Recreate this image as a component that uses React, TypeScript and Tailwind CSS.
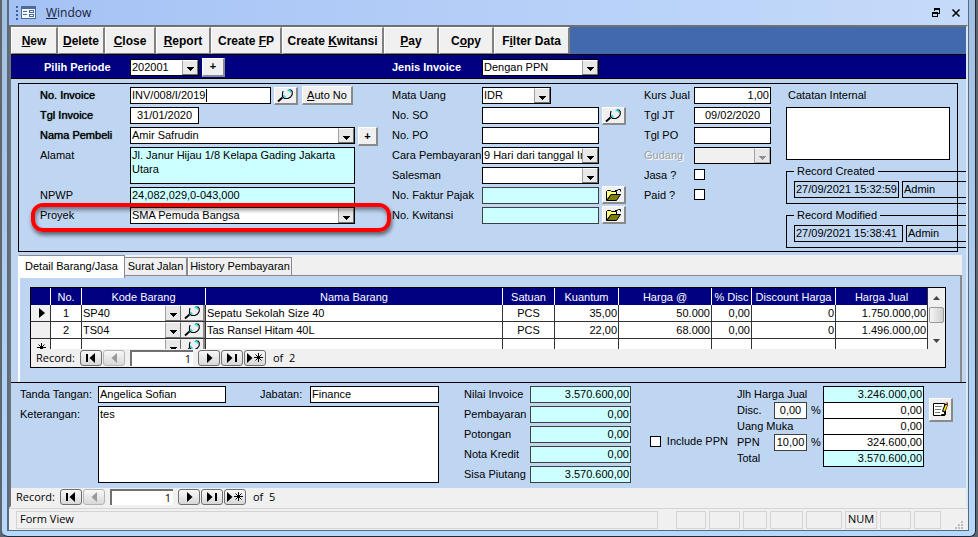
import { useId, type ReactNode } from 'react'
import clsx from 'clsx'

const field = 'h-[17px] border border-black bg-white px-px pb-px text-[11px] leading-[14px] outline-none rounded-none'
const raised =
  'flex items-center justify-center bg-[#f0f0f0] border-t border-l border-t-white border-l-white border-r-2 border-b-2 border-r-[#8a8a8a] border-b-[#8a8a8a]'
const strong = 'w-[90px] [text-shadow:0_0_1px_#000]'

function Combo({ id, value, className, disabled, label }: { id?: string; value: string; className?: string; disabled?: boolean; label?: string }) {
  return (
    <div className={clsx('relative flex h-[17px] border border-black', disabled ? 'bg-[#f0f0f0]' : 'bg-white', className)}>
      <select id={id} aria-label={label} disabled={disabled} className="w-full appearance-none bg-transparent pl-px pr-4 text-[11px] leading-[15px] outline-none">
        <option>{value}</option>
      </select>
      <ArrowBox disabled={disabled} />
    </div>
  )
}

function ArrowBox({ disabled }: { disabled?: boolean }) {
  return (
    <span className={clsx('pointer-events-none absolute inset-y-0 right-0 flex w-4 items-center justify-center border border-t-white border-l-[#a0a0a0] bg-[#e8e8e8]', disabled ? 'border-r-[#b0b0b0] border-b-[#b0b0b0]' : 'border-r-[#707070] border-b-[#707070]')}>
      <svg width="7" height="4" viewBox="0 0 7 4" className="mt-1" shapeRendering="crispEdges">
        <path d="M0 0h7v1H0zM1 1h5v1H1zM2 2h3v1H2zM3 3h1v1H3z" fill={disabled ? '#909090' : '#000'} />
      </svg>
    </span>
  )
}

function Row({ label, children, labelClass = 'w-[90px]' }: { label: string; children: (id: string) => ReactNode; labelClass?: string }) {
  const id = useId()
  return (
    <div className="flex">
      <label htmlFor={id} className={clsx('shrink-0 whitespace-nowrap leading-[17px]', labelClass)}>
        {label}
      </label>
      {children(id)}
    </div>
  )
}

function SearchIcon() {
  return (
    <svg width="17" height="14" viewBox="0 0 17 14" fill="none">
      <path d="M6 2L5.500 4.500V7.500L7.500 9.500H11L13.500 8L15.200 5.500V2.500L14 1H11.500" stroke="#000" strokeWidth="1.100" />
      <path d="M1 12.500L5.500 8.500" stroke="#000" strokeWidth="1.800" />
      <path d="M10.500 1.500H12.500L13.800 3.500" stroke="#00e5f0" strokeWidth="1.300" />
      <path d="M6.500 6L8.500 8.500" stroke="#00e5f0" strokeWidth="1.300" />
    </svg>
  )
}

function FolderIcon() {
  return (
    <svg width="17" height="14" viewBox="0 0 17 14">
      <path d="M1.500 12.500V3.500L2.500 2.500H5.500L6.500 3.500H11.500V6.500H6L1.500 12.500Z" fill="#ffff80" stroke="#000" />
      <path d="M2 12.500L6 6.500H15.500L11.500 12.500Z" fill="#808000" stroke="#000" />
      <path d="M10 2.500H12L13.500 1.500H15.500V3.500" fill="none" stroke="#000" />
    </svg>
  )
}

function NoteIcon() {
  return (
    <svg width="17" height="17" viewBox="0 0 17 17" fill="none">
      <path d="M1.500 2.500H12.500V13.500H9.500L8.500 14.500H1.500Z" fill="#fff" stroke="#000" />
      <path d="M9 14.500H13M13.500 10V14" stroke="#000" />
      <path d="M3 5.500H10M3 8.500H9M3 11.500H8" stroke="#777" />
      <path d="M14.500 3L11.500 11" stroke="#000" strokeWidth="3.500" />
      <path d="M14.500 4L12 10" stroke="#ffe600" strokeWidth="1.800" />
      <path d="M13.500 1.500H16V4Z" fill="#d02020" />
    </svg>
  )
}

function IconButton({ label, className, children }: { label: string; className?: string; children: ReactNode }) {
  return (
    <button type="button" aria-label={label} className={clsx(raised, className)}>
      {children}
    </button>
  )
}

const toolbar = [
  { pre: '', key: 'N', post: 'ew', width: 'w-[47px]' },
  { pre: '', key: 'D', post: 'elete', width: 'w-[47px]' },
  { pre: '', key: 'C', post: 'lose', width: 'w-[51px]' },
  { pre: '', key: 'R', post: 'eport', width: 'w-[55px]' },
  { pre: 'Create ', key: 'F', post: 'P', width: 'w-[71px]' },
  { pre: 'Create ', key: 'K', post: 'witansi', width: 'w-[102px]' },
  { pre: '', key: 'P', post: 'ay', width: 'w-[55px]' },
  { pre: 'C', key: 'o', post: 'py', width: 'w-[55px]' },
  { pre: 'F', key: 'i', post: 'lter Data', width: 'w-[76px]' },
]

const items = [
  { no: '1', kode: 'SP40', nama: 'Sepatu Sekolah Size 40', satuan: 'PCS', qty: '35,00', harga: '50.000', disc: '0,00', discHarga: '0', jual: '1.750.000,00' },
  { no: '2', kode: 'TS04', nama: 'Tas Ransel Hitam 40L', satuan: 'PCS', qty: '22,00', harga: '68.000', disc: '0,00', discHarga: '0', jual: '1.496.000,00' },
  { no: '', kode: '', nama: '', satuan: '', qty: '', harga: '', disc: '', discHarga: '', jual: '' },
]

function Star() {
  return <path d="M4.500 0V9M0 4.500H9M1.500 1.500L7.500 7.500M7.500 1.500L1.500 7.500" stroke="#000" fill="none" />
}

function NavButton({ kind, label, disabled }: { kind: 'first' | 'prev' | 'next' | 'last' | 'new'; label: string; disabled?: boolean }) {
  const color = disabled ? '#999' : '#000'
  return (
    <button
      type="button"
      aria-label={label}
      disabled={disabled}
      className={clsx('flex h-4 w-[22px] items-center justify-center rounded-[3px] border bg-linear-to-b from-[#f8f8f8] to-[#d8d8d8]', disabled ? 'border-[#b5b5b5]' : 'border-[#6f6f6f]')}
    >
      <svg width="18" height="10" viewBox="0 0 18 10">
        {kind === 'first' && <path d="M4 1h2v8H4zM13 0v10L7.500 5z" fill={color} />}
        {kind === 'prev' && <path d="M12 0v10L6.500 5z" fill={color} />}
        {kind === 'next' && <path d="M7 0v10L12.500 5z" fill={color} />}
        {kind === 'last' && <path d="M4 0v10L9.500 5zM12 1h2v8h-2z" fill={color} />}
        {kind === 'new' && (
          <>
            <path d="M1 0v10L6.500 5z" fill={color} />
            <g transform="translate(8 0)">
              <Star />
            </g>
          </>
        )}
      </svg>
    </button>
  )
}

function RecordNav({ total }: { total: string }) {
  const id = useId()
  return (
    <div className="flex h-[18px] items-center bg-[#f0f0f0] pl-[5px] font-['Open_Sans',sans-serif] text-[11px]">
      <label htmlFor={id} className="w-11">
        Record:
      </label>
      <div className="flex gap-px">
        <NavButton kind="first" label="First record" />
        <NavButton kind="prev" label="Previous record" disabled />
      </div>
      <input id={id} defaultValue="1" className="mx-[5px] h-4 w-[63px] border-t-2 border-l-2 border-[#707070] bg-white pr-0.5 text-right outline-none" />
      <div className="flex gap-px">
        <NavButton kind="next" label="Next record" />
        <NavButton kind="last" label="Last record" />
        <NavButton kind="new" label="New record" />
      </div>
      <span className="ml-[7px]">of&nbsp; {total}</span>
    </div>
  )
}

function MenuBar() {
  return (
    <header className="flex h-[25px] items-center bg-linear-to-r from-[#a5c2f5] to-[#c5dbfa] px-[7px] font-['Open_Sans',sans-serif] text-xs">
      <svg width="20" height="15" viewBox="0 0 20 15" className="mr-[10px]" shapeRendering="crispEdges">
        <path d="M0 1h2v2H0zM0 5h2v2H0zM0 9h2v2H0zM0 13h2v2H0z" fill="#3c5f9c" />
        <path d="M5 1h15v13H5z" fill="#4d6a9c" />
        <path d="M6 4h13v9H6z" fill="#f4f8ff" />
        <path d="M7 6h4v1H7zM7 9h4v1H7zM13 5h5v3h-5zM13 9h5v3h-5z" fill="#4d6a9c" />
        <path d="M14 6h3v1h-3zM14 10h3v1h-3z" fill="#fff" />
      </svg>
      <button type="button" className="text-[#16233a]">
        <u>W</u>indow
      </button>
      <div className="ml-auto flex gap-[10px]">
        <button type="button" aria-label="Restore">
          <svg width="10" height="10" viewBox="0 0 10 10" shapeRendering="crispEdges">
            <path d="M3 0h6v6H7V5h1V2H4v1H3zM1 4h6v5H1z" fill="#000" />
            <path d="M2 6h4v2H2z" fill="#c5dbfa" />
          </svg>
        </button>
        <button type="button" aria-label="Close">
          <svg width="10" height="10" viewBox="0 0 10 10">
            <path d="M1.500 1.500L8.500 8.500M8.500 1.500L1.500 8.500" stroke="#000" strokeWidth="1.500" />
          </svg>
        </button>
      </div>
    </header>
  )
}

function PeriodBar() {
  return (
    <div className="grid h-[25px] grid-cols-[348px_1fr] items-center border-y border-black bg-[#000080] pt-px pl-[33px]">
      <div className="flex items-center">
        <label htmlFor="periode" className="w-[86px] font-bold text-white">
          Pilih Periode
        </label>
        <Combo id="periode" value="202001" className="w-[69px]" />
        <button type="button" className={clsx(raised, 'ml-[3px] h-[19px] w-[23px] font-bold')}>
          +
        </button>
      </div>
      <div className="flex items-center">
        <label htmlFor="jenis" className="w-[90px] font-bold text-white">
          Jenis Invoice
        </label>
        <Combo id="jenis" value="Dengan PPN" className="w-[117px]" />
      </div>
    </div>
  )
}

function InvoiceHeader() {
  return (
    <section className="mt-1 mr-2 ml-[7px] grid grid-cols-[352px_252px_142px_1fr] border border-black py-[3px] pl-[21px]">
      <div className="flex flex-col gap-[3px]">
        <Row label="No. Invoice" labelClass={strong}>
          {(id) => (
            <div className="flex">
              <div className="relative flex">
                <input id={id} defaultValue="INV/008/I/2019" className={clsx(field, 'w-[141px]')} />
                <span className="absolute top-0.5 left-[76px] h-[13px] w-px bg-black" />
              </div>
              <IconButton label="Cari invoice" className="-mb-px ml-[3px] h-[18px] w-6">
                <SearchIcon />
              </IconButton>
              <button type="button" className={clsx(raised, '-mt-px -mb-px ml-1 h-[19px] w-[51px] whitespace-nowrap')}>
                <span>
                  <u>A</u>uto No
                </span>
              </button>
            </div>
          )}
        </Row>
        <Row label="Tgl Invoice" labelClass={strong}>
          {(id) => <input id={id} defaultValue="31/01/2020" className={clsx(field, 'w-[69px] text-center')} />}
        </Row>
        <Row label="Nama Pembeli" labelClass={strong}>
          {(id) => (
            <>
              <Combo id={id} value="Amir Safrudin" className="w-[225px]" />
              <button type="button" className={clsx(raised, '-mb-0.5 ml-[3px] h-[19px] w-5 font-bold')}>
                +
              </button>
            </>
          )}
        </Row>
        <Row label="Alamat">
          {(id) => (
            <textarea
              id={id}
              readOnly
              defaultValue="Jl. Janur Hijau 1/8 Kelapa Gading Jakarta Utara"
              className="h-[37px] w-[225px] resize-none overflow-hidden border border-black bg-[#ccffff] px-px leading-[14px] outline-none"
            />
          )}
        </Row>
        <Row label="NPWP">
          {(id) => <input id={id} readOnly defaultValue="24,082,029,0-043,000" className="h-[17px] w-[225px] border border-black bg-[#ccffff] px-px pb-px leading-[14px] outline-none" />}
        </Row>
        <div className="relative">
          <Row label="Proyek">{(id) => <Combo id={id} value="SMA Pemuda Bangsa" className="w-[225px]" />}</Row>
          <div className="pointer-events-none absolute -top-1 -left-[9px] h-[29px] w-[360px] rounded-xl border-4 border-[#ff0000] shadow-[1px_3px_4px_rgba(0,0,0,0.55),inset_1px_3px_4px_rgba(0,0,0,0.45)]" />
        </div>
      </div>

      <div className="flex flex-col gap-[3px]">
        <Row label="Mata Uang">{(id) => <Combo id={id} value="IDR" className="w-[69px]" />}</Row>
        <Row label="No. SO">
          {(id) => (
            <>
              <input id={id} className={clsx(field, 'w-[117px]')} />
              <IconButton label="Cari SO" className="-mb-px ml-[3px] h-[18px] w-6">
                <SearchIcon />
              </IconButton>
            </>
          )}
        </Row>
        <Row label="No. PO">{(id) => <input id={id} className={clsx(field, 'w-[117px]')} />}</Row>
        <Row label="Cara Pembayaran">{(id) => <Combo id={id} value="9 Hari dari tanggal Invoice" className="w-[117px]" />}</Row>
        <Row label="Salesman">{(id) => <Combo id={id} value="" className="w-[117px]" />}</Row>
        {['No. Faktur Pajak', 'No. Kwitansi'].map((label) => (
          <Row key={label} label={label}>
            {(id) => (
              <>
                <input id={id} readOnly className="h-[17px] w-[117px] border border-[#404040] bg-[#ccffff] outline-none" />
                <IconButton label={`Buka ${label}`} className="-mt-px ml-[3px] h-[18px] w-6">
                  <FolderIcon />
                </IconButton>
              </>
            )}
          </Row>
        ))}
      </div>

      <div className="flex flex-col gap-[3px]">
        <Row label="Kurs Jual" labelClass="w-[50px]">
          {(id) => <input id={id} defaultValue="1,00" className={clsx(field, 'w-[77px] text-right')} />}
        </Row>
        <Row label="Tgl JT" labelClass="w-[50px]">
          {(id) => <input id={id} defaultValue="09/02/2020" className={clsx(field, 'w-[77px] text-center')} />}
        </Row>
        <Row label="Tgl PO" labelClass="w-[50px]">
          {(id) => <input id={id} className={clsx(field, 'w-[77px]')} />}
        </Row>
        <Row label="Gudang" labelClass="w-[50px] text-[#a0a0a0] [text-shadow:1px_1px_0_#fff]">
          {(id) => <Combo id={id} value="" disabled className="w-[77px]" />}
        </Row>
        {['Jasa ?', 'Paid ?'].map((label) => (
          <Row key={label} label={label} labelClass="w-[50px]">
            {(id) => <input id={id} type="checkbox" className="mt-0.5 size-[11px] appearance-none border border-black bg-white checked:bg-black" />}
          </Row>
        ))}
      </div>

      <div className="flex min-w-0 flex-col">
        <label htmlFor="catatan" className="pl-0.5 leading-[17px]">
          Catatan Internal
        </label>
        <textarea id="catatan" className="mt-[3px] mr-[7px] h-[53px] resize-none border border-black bg-white outline-none" />
        <RecordStamp title="Record Created" time="27/09/2021 15:32:59" width="w-[105px]" />
        <RecordStamp title="Record Modified" time="27/09/2021 15:38:41" width="w-[109px]" />
      </div>
    </section>
  )
}

function RecordStamp({ title, time, width }: { title: string; time: string; width: string }) {
  return (
    <fieldset className="mt-[5px] -mr-[9px] h-[39px] border border-r-0 border-black pl-[7px]">
      <legend className="ml-0 px-[3px] leading-[13px]">{title}</legend>
      <div className="mt-[3px] flex gap-[3px]">
        <input aria-label={title} readOnly defaultValue={time} className={clsx('h-[17px] shrink-0 border border-black px-px pb-px leading-[14px] outline-none', width)} />
        <input aria-label={`${title} by`} readOnly defaultValue="Admin" className="h-[17px] w-full min-w-0 border border-r-0 border-black px-px pb-px leading-[14px] outline-none" />
      </div>
    </fieldset>
  )
}

function ItemTable() {
  const th = 'border-l border-white p-0 font-normal'
  const td = 'border-l border-b border-[#333] p-0'
  return (
    <div className="border border-black bg-[#f0f0f0]">
      <div className="flex h-[61px] overflow-hidden">
        <div className="min-w-0 flex-1">
          <table className="w-full table-fixed border-separate border-spacing-0 bg-white leading-4">
            <colgroup>
              <col className="w-[19px]" />
              <col className="w-[31px]" />
              <col className="w-[124px]" />
              <col />
              <col className="w-[52px]" />
              <col className="w-[64px]" />
              <col className="w-[93px]" />
              <col className="w-[40px]" />
              <col className="w-[84px]" />
              <col className="w-[92px]" />
            </colgroup>
            <thead>
              <tr className="h-[17px] bg-[#000080] text-white">
                <th className="p-0" aria-label="Selector" />
                <th className={th}>No.</th>
                <th className={th}>Kode Barang</th>
                <th className={th}>Nama Barang</th>
                <th className={th}>Satuan</th>
                <th className={th}>Kuantum</th>
                <th className={th}>Harga @</th>
                <th className={th}>% Disc</th>
                <th className={th}>Discount Harga</th>
                <th className={th}>Harga Jual</th>
              </tr>
            </thead>
            <tbody>
              {items.map((item, i) => (
                <tr key={i} className="h-[17px]">
                  <td className="border-b border-[#333] bg-[#f0f0f0] p-0">
                    <svg width="18" height="10" viewBox="0 0 18 10">
                      {i === 0 && <path d="M8 0v10L14 5z" fill="#000" />}
                      {i === 2 && (
                        <g transform="translate(6 1)">
                          <Star />
                        </g>
                      )}
                    </svg>
                  </td>
                  <td className={clsx(td, 'text-center')}>{item.no}</td>
                  <td className={td}>
                    <div className="flex h-4">
                      <div className="relative flex flex-1">
                        <select aria-label="Kode barang" className="w-full appearance-none bg-transparent pl-px outline-none">
                          <option>{item.kode}</option>
                        </select>
                        <ArrowBox />
                      </div>
                      <button type="button" aria-label="Cari barang" className="flex w-6 items-center justify-center border-r-2 border-b border-[#8a8a8a] bg-[#f0f0f0]">
                        <SearchIcon />
                      </button>
                    </div>
                  </td>
                  <td className={clsx(td, 'pl-px')}>{item.nama}</td>
                  <td className={clsx(td, 'text-center')}>{item.satuan}</td>
                  <td className={clsx(td, 'pr-px text-right')}>{item.qty}</td>
                  <td className={clsx(td, 'pr-px text-right')}>{item.harga}</td>
                  <td className={clsx(td, 'pr-px text-right')}>{item.disc}</td>
                  <td className={clsx(td, 'pr-px text-right')}>{item.discHarga}</td>
                  <td className={clsx(td, 'pr-px text-right')}>{item.jual}</td>
                </tr>
              ))}
            </tbody>
          </table>
        </div>
        <div className="flex w-[18px] flex-col items-center border-l border-[#333] bg-[#f0f0f0]">
          <svg width="7" height="4" viewBox="0 0 7 4" className="mt-[8px]">
            <path d="M0 4L3.500 0L7 4z" fill="#444" />
          </svg>
          <span className="mt-[7px] h-4 w-[15px] rounded-[2px] border border-[#999] bg-linear-to-r from-[#f5f5f5] to-[#cfcfcf]" />
          <svg width="7" height="4" viewBox="0 0 7 4" className="mt-auto mb-[6px]">
            <path d="M0 0L3.500 4L7 0z" fill="#444" />
          </svg>
        </div>
      </div>
      <RecordNav total="2" />
    </div>
  )
}

function Details() {
  return (
    <section className="mt-[3px] mr-1 ml-[7px] bg-[#f0f0f0]">
      <div role="tablist" className="flex h-5 items-end">
        <button type="button" role="tab" aria-selected="true" className="-mb-[3px] h-[23px] w-[107px] border-t border-r border-l border-[#8a8a8a] border-l-white bg-white pb-[2px] whitespace-nowrap">
          Detail Barang/Jasa
        </button>
        <button type="button" role="tab" aria-selected="false" className="h-[18px] w-[63px] border-t border-r-2 border-[#8a8a8a] whitespace-nowrap">
          Surat Jalan
        </button>
        <button type="button" role="tab" aria-selected="false" className="h-[18px] w-[104px] border-t border-r border-l border-[#8a8a8a] border-l-white whitespace-nowrap">
          History Pembayaran
        </button>
      </div>
      <div className="border-t border-r-2 border-l-2 border-[#8a8a8a] border-l-white bg-[#bfd6f3] pt-[11px] pr-[14px] pb-[14px] pl-[10px]">
        <ItemTable />
      </div>
    </section>
  )
}

const payments = [
  ['Nilai Invoice', '3.570.600,00'],
  ['Pembayaran', '0,00'],
  ['Potongan', '0,00'],
  ['Nota Kredit', '0,00'],
  ['Sisa Piutang', '3.570.600,00'],
]

const totals = [
  { label: 'Jlh Harga Jual', value: '3.246.000,00', cyan: true },
  { label: 'Disc.', value: '0,00', percent: '0,00' },
  { label: 'Uang Muka', value: '0,00' },
  { label: 'PPN', value: '324.600,00', percent: '10,00' },
  { label: 'Total', value: '3.570.600,00', cyan: true },
]

function Footer() {
  return (
    <section className="flex border-t border-black pt-[3px] pr-[13px] pb-[5px] pl-[9px]">
      <div className="flex w-[419px] flex-col gap-[3px]">
        <div className="flex">
          <Row label="Tanda Tangan:" labelClass="w-[78px]">
            {(id) => <input id={id} defaultValue="Angelica Sofian" className={clsx(field, 'w-[128px]')} />}
          </Row>
          <div className="ml-[34px]">
            <Row label="Jabatan:" labelClass="w-[50px]">
              {(id) => <input id={id} defaultValue="Finance" className={clsx(field, 'w-[129px]')} />}
            </Row>
          </div>
        </div>
        <Row label="Keterangan:" labelClass="w-[78px]">
          {(id) => <textarea id={id} defaultValue="tes" className="h-[77px] flex-1 resize-none border border-black bg-white px-px leading-[15px] outline-none" />}
        </Row>
      </div>

      <div className="ml-[25px] flex flex-col gap-[3px]">
        {payments.map(([label, value]) => (
          <Row key={label} label={label} labelClass="w-[66px]">
            {(id) => <input id={id} readOnly defaultValue={value} className="h-[17px] w-[101px] border border-[#404040] bg-[#ccffff] px-px pb-px text-right leading-[14px] outline-none" />}
          </Row>
        ))}
      </div>

      <label className="mt-[47px] ml-auto flex h-[17px] items-center gap-[6px]">
        <input type="checkbox" className="size-[11px] appearance-none border border-black bg-white checked:bg-black" />
        Include PPN
      </label>

      <div className="ml-[9px]">
        {totals.map(({ label, value, percent, cyan }) => (
          <div key={label} className="flex h-4">
            <Row label={label} labelClass={percent ? 'w-[37px]' : 'w-[86px]'}>
              {(id) => (
                <>
                  {percent && (
                    <span className="flex w-[49px] gap-1 leading-[17px]">
                      <input aria-label={`${label} persen`} defaultValue={percent} className="h-[17px] w-[33px] border border-[#404040] bg-white px-px pb-px text-center leading-[14px] outline-none" />%
                    </span>
                  )}
                  <input id={id} defaultValue={value} className={clsx('h-[17px] w-[101px] border border-black px-px pb-px text-right leading-[14px] outline-none', cyan ? 'bg-[#ccffff]' : 'bg-white')} />
                </>
              )}
            </Row>
          </div>
        ))}
      </div>
      <IconButton label="Catatan" className="mt-[12px] ml-[5px] size-6">
        <NoteIcon />
      </IconButton>
    </section>
  )
}

function StatusBar() {
  const cell = 'h-[18px] border border-[#d4d4d4]'
  return (
    <footer className="flex h-[22px] items-center border-t border-[#d4d4d4] bg-[#f0f0f0] pr-1 pl-[7px] font-['Open_Sans',sans-serif] text-[11px]">
      <div className={clsx(cell, 'mr-[18px] flex flex-1 items-center pl-[3px]')}>Form View</div>
      <div className="mr-[14px] flex gap-[3px]">
        <span className={clsx(cell, 'w-[30px]')} />
        <span className={clsx(cell, 'w-[31px]')} />
        <span className={clsx(cell, 'w-6')} />
        <span className={clsx(cell, 'w-[33px]')} />
        <span className={clsx(cell, 'w-9')} />
        <span className={clsx(cell, 'flex w-8 items-center justify-center')}>NUM</span>
        <span className={clsx(cell, 'w-[31px]')} />
        <span className={clsx(cell, 'w-[27px]')} />
      </div>
      <svg width="9" height="9" viewBox="0 0 9 9" className="self-end" shapeRendering="crispEdges">
        <path d="M6 0h2v2H6zM3 3h2v2H3zM6 3h2v2H6zM0 6h2v2H0zM3 6h2v2H3zM6 6h2v2H6z" fill="#bdbdbd" />
      </svg>
    </footer>
  )
}

export default function App() {
  return (
    <div className="min-h-screen bg-[#5f656d] pr-[2px] pb-[2px] pl-[2px] font-['Liberation_Sans',Arial,sans-serif] text-[11px] text-black">
      <div className="rounded-b-[6px] border-r border-b border-[#1f2a36] bg-[#a9cdf3] bg-linear-to-b from-[#a3bfdf] to-[#b5d8fb] pr-[6px] pb-[5px] pl-[5px]">
        <div className="border-r border-b border-l-2 border-[#566a82]">
          <MenuBar />
          <main className="border-t-2 border-r-2 border-b-2 border-l-2 border-[#707070] border-r-[#dbe7f5] border-b-[#f0f0f0] bg-[#bfd6f3]">
            <nav className="flex bg-[#4169ab]">
              {toolbar.map(({ pre, key, post, width }) => (
                <button
                  key={pre + key + post}
                  type="button"
                  className={clsx('h-[27px] border-t border-l border-r-2 border-b border-t-white border-l-white border-r-[#808080] border-b-[#808080] bg-[#f0f0f0] text-xs font-bold whitespace-nowrap', width)}
                >
                  {pre}
                  <u>{key}</u>
                  {post}
                </button>
              ))}
            </nav>
            <PeriodBar />
            <div className="overflow-hidden">
              <InvoiceHeader />
              <Details />
            </div>
            <Footer />
            <RecordNav total="5" />
          </main>
          <StatusBar />
        </div>
      </div>
    </div>
  )
}
